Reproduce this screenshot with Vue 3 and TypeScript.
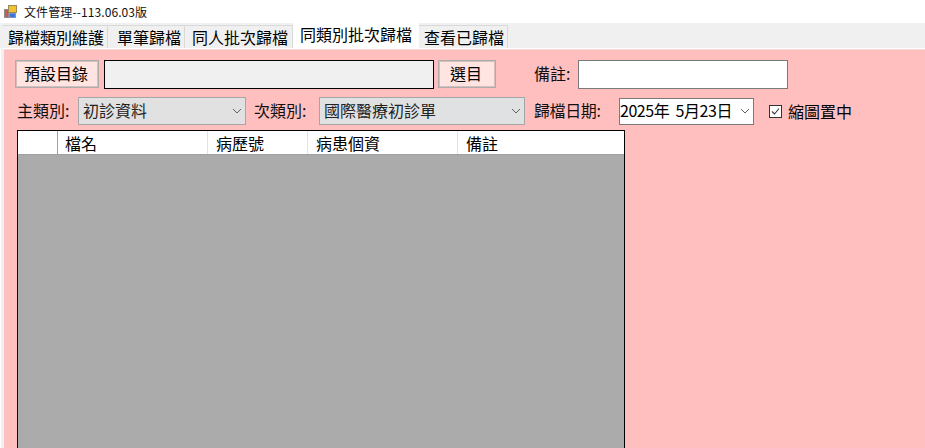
<script setup lang="ts">
const tabs = [
  { label: '歸檔類別維護', width: 105, pad: 5 },
  { label: '單筆歸檔', width: 77, pad: 9 },
  { label: '同人批次歸檔', width: 108, pad: 7 },
  { label: '同類別批次歸檔', width: 126, pad: 7, active: true },
  { label: '查看已歸檔', width: 89, pad: 5 },
]
const columns = [
  { label: '', width: 40, pad: 8 },
  { label: '檔名', width: 150, pad: 7 },
  { label: '病歷號', width: 100, pad: 8 },
  { label: '病患個資', width: 150, pad: 8 },
  { label: '備註', width: 166, pad: 8 },
]
</script>

<template>
  <div class="window">
    <header class="titlebar">
      <svg class="app-icon" width="16" height="16" viewBox="0 0 16 16">
        <rect x="1.5" y="5.5" width="4" height="8" fill="#d0564e" stroke="#8c8c8c" />
        <rect x="5.5" y="1.5" width="8" height="7" fill="#efc234" stroke="#9a8a5a" />
        <rect x="6.5" y="9.5" width="6" height="4" fill="#3f74dc" stroke="#7f96c4" />
      </svg>
      <span class="title">文件管理--113.06.03版</span>
    </header>

    <nav class="tabstrip">
      <div
        v-for="tab in tabs"
        :key="tab.label"
        class="tab"
        :class="{ active: tab.active }"
        :style="{ width: tab.width + 'px', paddingLeft: tab.pad + 'px' }"
      >{{ tab.label }}</div>
    </nav>

    <main class="panel">
      <div class="row row-one">
        <button class="btn btn-default">預設目錄</button>
        <div class="path-input"></div>
        <button class="btn btn-pick">選目</button>
        <label class="label note-label">備註:</label>
        <div class="note-input"></div>
      </div>

      <div class="row row-two">
        <label class="label main-label">主類別:</label>
        <div class="select select-main">
          <span>初診資料</span>
          <svg class="chev" width="10" height="6" viewBox="0 0 10 6"><path d="M1 1 L5 5 L9 1" fill="none" stroke="#606060" stroke-width="1" /></svg>
        </div>
        <label class="label sub-label">次類別:</label>
        <div class="select select-sub">
          <span>國際醫療初診單</span>
          <svg class="chev" width="10" height="6" viewBox="0 0 10 6"><path d="M1 1 L5 5 L9 1" fill="none" stroke="#606060" stroke-width="1" /></svg>
        </div>
        <label class="label date-label">歸檔日期:</label>
        <div class="date">
          <span>2025年&nbsp;&nbsp;5月23日</span>
          <svg class="chev" width="10" height="6" viewBox="0 0 10 6"><path d="M1 1 L5 5 L9 1" fill="none" stroke="#606060" stroke-width="1" /></svg>
        </div>
        <svg class="check" width="13" height="13" viewBox="0 0 13 13">
          <rect x="0.5" y="0.5" width="12" height="12" fill="#fff" stroke="#333" />
          <path d="M3 6.5 L5.5 9 L10 3.5" fill="none" stroke="#333" stroke-width="1.1" />
        </svg>
        <span class="check-label">縮圖置中</span>
      </div>

      <section class="grid">
        <div class="grid-head">
          <div
            v-for="col in columns"
            :key="col.label"
            class="cell"
            :style="{ width: col.width + 'px', paddingLeft: col.pad + 'px' }"
          >{{ col.label }}</div>
        </div>
      </section>
    </main>
  </div>
</template>

<style>
html, body { margin: 0; padding: 0; overflow: hidden; background: #fff; }
</style>

<style scoped>
.window {
  width: 925px;
  height: 448px;
  display: flex;
  flex-direction: column;
  overflow: hidden;
  font-family: "Noto Sans CJK TC", "Noto Sans", sans-serif;
  color: #000;
  background: #fff;
}
.titlebar {
  height: 23px;
  display: flex;
  align-items: center;
  padding-left: 3px;
  flex: none;
}
.app-icon { flex: none; }
.title { margin-left: 5px; font-size: 12px; letter-spacing: 0.1px; color: #111; }
.tabstrip {
  height: 25px;
  flex: none;
  display: flex;
  align-items: flex-end;
  padding-left: 3px;
  background: #f0f0f0;
  box-sizing: border-box;
}
.tab {
  height: 23px;
  box-sizing: border-box;
  border: 1px solid #d9d9d9;
  border-bottom: none;
  border-left: none;
  font-size: 16px;
  line-height: 22px;
  white-space: nowrap;
  background: #f0f0f0;
}
.tab.active {
  height: 25px;
  background: #fff;
  border: none;
  line-height: 22px;
}
.panel {
  flex: 1;
  min-height: 0;
  margin-left: 1px;
  border-left: 3px solid #f0f0f0;
  border-top: 1px solid #fff;
  background: #ffbfbf;
  padding: 11px 0 0 11px;
  display: flex;
  flex-direction: column;
  box-shadow: inset 0 1px 0 #f4d8d8;
}
.row { display: flex; align-items: center; font-size: 16px; flex: none; }
.row-one { height: 29px; align-items: flex-start; }
.row-two { height: 28px; margin-top: 8px; padding-left: 2px; }
.btn {
  height: 28px;
  box-sizing: border-box;
  border: 1px solid #adadad;
  box-shadow: inset 0 0 0 1px #d9bdbb;
  background: #ffe4e1;
  font: inherit;
  font-size: 16px;
  color: #000;
  padding: 0 2px 3px 0;
}
.btn-default { width: 84px; }
.path-input {
  width: 330px;
  height: 29px;
  margin-left: 5px;
  box-sizing: border-box;
  border: 1px solid #000;
  background: #f0f0f0;
}
.btn-pick { width: 58px; margin-left: 4px; }
.label { white-space: nowrap; color: #111; }
.note-label { margin-left: 38px; width: 44px; line-height: 27px; }
.note-input {
  width: 210px;
  height: 29px;
  box-sizing: border-box;
  border: 1px solid #7a7a7a;
  background: #fff;
}
.main-label { width: 61px; padding-bottom: 2px; }
.select {
  height: 28px;
  box-sizing: border-box;
  border: 1px solid #a6a6a6;
  background: #e1e1e1;
  display: flex;
  align-items: center;
  justify-content: space-between;
  padding: 0 3px 2px 4px;
  color: #222;
}
.select-main { width: 168px; }
.sub-label { margin-left: 8px; width: 65px; padding-bottom: 2px; }
.select-sub { width: 206px; background: #dfe1e3; }
.date-label { margin-left: 9px; width: 85px; padding-bottom: 2px; letter-spacing: -0.4px; }
.date {
  width: 135px;
  height: 27px;
  box-sizing: border-box;
  border: 1px solid #7a7a7a;
  background: #fff;
  display: flex;
  align-items: center;
  justify-content: space-between;
  padding: 0 3px 2px 0;
  white-space: nowrap;
  letter-spacing: -0.45px;
}
.chev { flex: none; margin-top: 2px; }
.check { margin-left: 15px; flex: none; }
.check-label { margin-left: 6px; padding-bottom: 1px; }
.grid {
  flex: 1;
  min-height: 0;
  width: 608px;
  margin-top: 5px;
  margin-left: 2px;
  box-sizing: border-box;
  border: 1px solid #000;
  border-bottom: none;
  background: #ababab;
}
.grid-head {
  display: flex;
  height: 24px;
  background: #fff;
  border-bottom: 1px solid #a0a0a0;
  box-sizing: border-box;
  font-size: 16px;
}
.cell {
  box-sizing: border-box;
  line-height: 24px;
  border-right: 1px solid #e3e3e3;
  white-space: nowrap;
}
.cell:first-child { border-right-color: #a0a0a0; }
.cell:last-child { border-right: none; }
</style>
